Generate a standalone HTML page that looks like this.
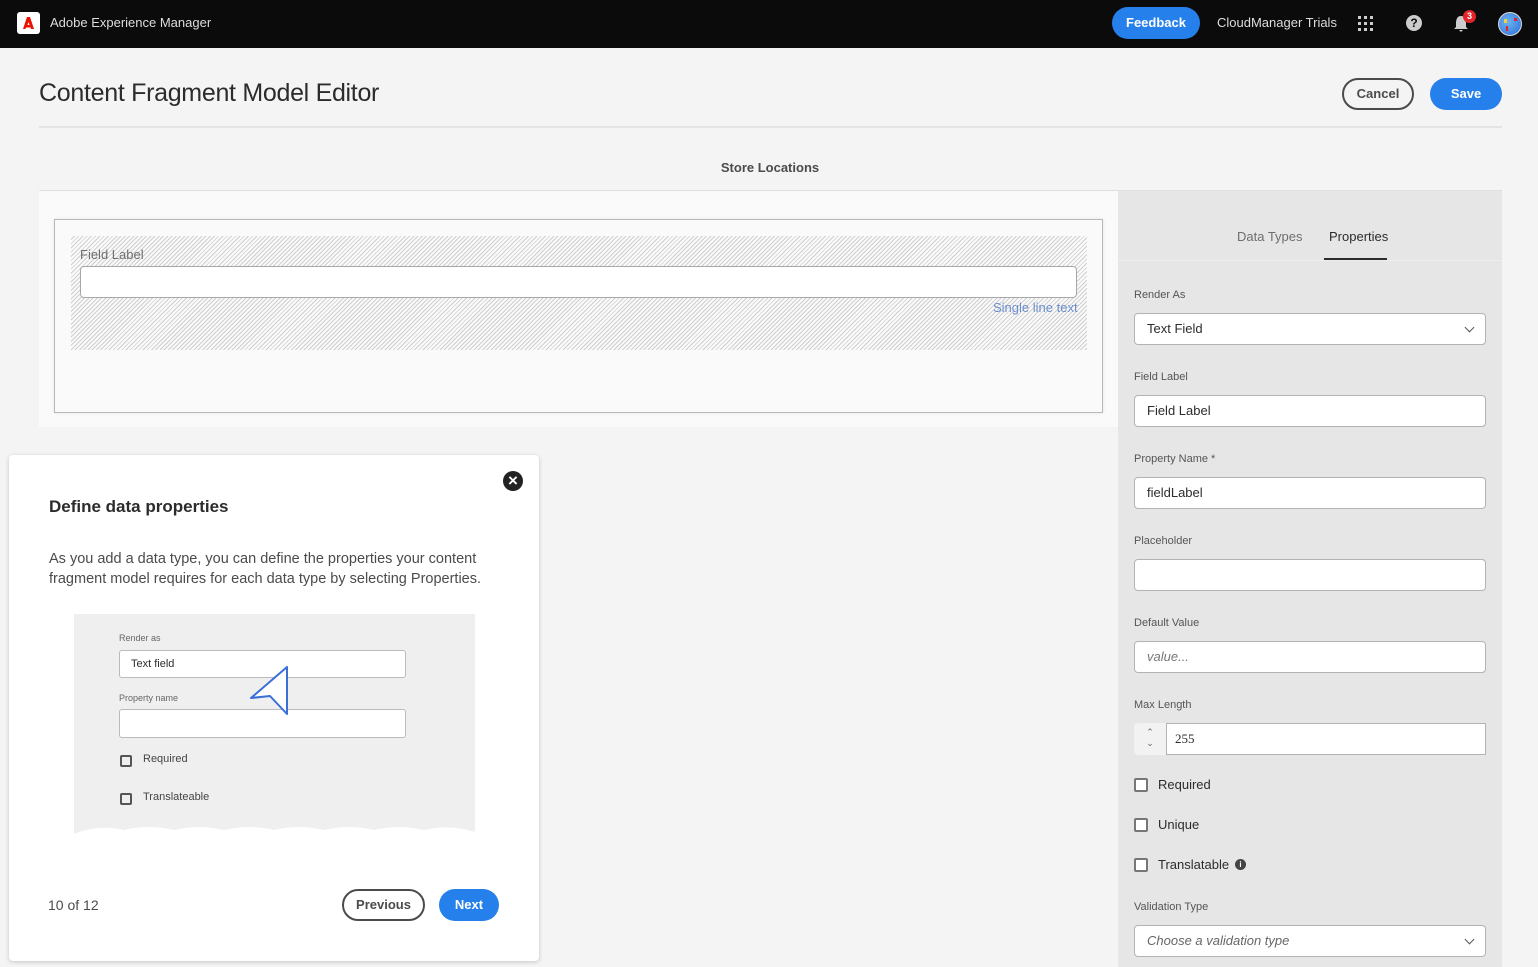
<!DOCTYPE html>
<html><head><meta charset="utf-8"><style>
*{box-sizing:border-box;margin:0;padding:0}
body{width:1538px;height:967px;overflow:hidden;background:#f4f4f4;font-family:"Liberation Sans",sans-serif;color:#2c2c2c;position:relative}
.a{position:absolute}
.top{left:0;top:0;width:1538px;height:48px;background:#0b0b0b}
.lbl{font-size:11px;color:#555}
.inp{background:#fff;border:1px solid #b3b3b3;border-radius:4px;height:32px;font-size:13px;padding:0 12px;line-height:30px;color:#2c2c2c}
.cb{width:14px;height:14px;border:2px solid #777;border-radius:2px;background:#fff}
.chev{position:absolute;right:12px;top:10px;width:7px;height:7px;border-right:1.5px solid #555;border-bottom:1.5px solid #555;transform:rotate(45deg)}
</style></head><body>
<div class="a top">
 <div class="a" style="left:17px;top:12px;width:23px;height:22px;background:#fff;border-radius:3px"><svg width="23" height="22" viewBox="0 0 23 22"><path d="M6 17 L10 5 L13 5 L17 17 L14 17 L11.5 10 L10.5 13 L12.5 13 L13.3 15.5 L9 15.5 L8.5 17Z" fill="#eb1000"/></svg></div>
 <div class="a" style="left:50px;top:15px;font-size:13px;color:#ddd">Adobe Experience Manager</div>
 <div class="a" style="left:1112px;top:7px;width:88px;height:32px;border-radius:16px;background:#2680eb;color:#fff;font-size:13px;font-weight:bold;text-align:center;line-height:32px">Feedback</div>
 <div class="a" style="left:1217px;top:15px;font-size:13px;color:#ddd">CloudManager Trials</div>
 <svg class="a" style="left:1357px;top:15px" width="17" height="17"><g fill="#ccc"><rect x="1" y="1" width="3" height="3"/><rect x="7" y="1" width="3" height="3"/><rect x="13" y="1" width="3" height="3"/><rect x="1" y="7" width="3" height="3"/><rect x="7" y="7" width="3" height="3"/><rect x="13" y="7" width="3" height="3"/><rect x="1" y="13" width="3" height="3"/><rect x="7" y="13" width="3" height="3"/><rect x="13" y="13" width="3" height="3"/></g></svg>
 <div class="a" style="left:1406px;top:15px;width:16px;height:16px;border-radius:8px;background:#ccc;color:#0b0b0b;font-size:12px;font-weight:bold;text-align:center;line-height:16px">?</div>
 <svg class="a" style="left:1452px;top:14px" width="18" height="20"><path d="M9 2 C5 2 4 6 4 9 L4 13 L2 15 L16 15 L14 13 L14 9 C14 6 13 2 9 2Z M7 16 L11 16 L9 18Z" fill="#ccc"/></svg>
 <div class="a" style="left:1463px;top:10px;width:13px;height:13px;border-radius:7px;background:#e3242b;color:#fff;font-size:9px;text-align:center;line-height:13px;font-weight:bold">3</div>
 <div class="a" style="left:1498px;top:12px;width:24px;height:24px;border-radius:12px;background:radial-gradient(circle at 40% 40%,#6fb3f0,#2a6ed8);border:1px solid #ddd"><div class="a" style="left:5px;top:6px;width:3px;height:4px;background:#f3d13a"></div><div class="a" style="left:15px;top:5px;width:3px;height:3px;background:#e3242b"></div><div class="a" style="left:7px;top:13px;width:2px;height:5px;background:#e3242b"></div></div>
</div>
<div class="a" style="left:39px;top:79px;font-size:25px;color:#2c2c2c;letter-spacing:-0.3px">Content Fragment Model Editor</div>
<div class="a" style="left:1342px;top:78px;width:72px;height:32px;border:2px solid #4b4b4b;border-radius:16px;font-size:13px;font-weight:bold;text-align:center;line-height:28px;color:#4b4b4b">Cancel</div>
<div class="a" style="left:1430px;top:78px;width:72px;height:32px;border-radius:16px;background:#2680eb;color:#fff;font-size:13px;font-weight:bold;text-align:center;line-height:32px">Save</div>
<div class="a" style="left:39px;top:126px;width:1463px;height:2px;background:#e4e4e4"></div>
<div class="a" style="left:0;top:160px;width:1540px;text-align:center;font-size:13px;font-weight:bold;color:#4b4b4b">Store Locations</div>
<div class="a" style="left:39px;top:190px;width:1463px;height:1px;background:#e0e0e0"></div>
<div class="a" style="left:39px;top:191px;width:1079px;height:236px;background:#fafafa"></div>
<div class="a" style="left:54px;top:219px;width:1049px;height:194px;border:1px solid #b8b8b8;background:#fafafa;box-shadow:0 0 4px rgba(0,0,0,.08)"></div>
<div class="a" style="left:71px;top:236px;width:1016px;height:114px;background:repeating-linear-gradient(135deg,#fafafa 0 2px,#cfcfcf 2px 3px)"></div>
<div class="a" style="left:80px;top:247px;font-size:13px;color:#6e6e6e">Field Label</div>
<div class="a" style="left:80px;top:266px;width:997px;height:32px;background:#fff;border:1px solid #a8a8a8;border-radius:4px"></div>
<div class="a" style="left:993px;top:300px;font-size:13px;color:#6b8fd0">Single line text</div>
<div class="a" style="left:1118px;top:191px;width:384px;height:776px;background:#e6e6e6"></div>
<div class="a" style="left:1118px;top:260px;width:384px;height:1px;background:#ededed"></div>
<div class="a" style="left:1237px;top:229px;font-size:13px;color:#6e6e6e">Data Types</div>
<div class="a" style="left:1329px;top:229px;font-size:13px;color:#2c2c2c">Properties</div>
<div class="a" style="left:1324px;top:258px;width:63px;height:2px;background:#2c2c2c"></div>
<div class="a lbl" style="left:1134px;top:289px">Render As</div>
<div class="a inp" style="left:1134px;top:313px;width:352px">Text Field<span class="chev"></span></div>
<div class="a lbl" style="left:1134px;top:371px">Field Label</div>
<div class="a inp" style="left:1134px;top:395px;width:352px">Field Label</div>
<div class="a lbl" style="left:1134px;top:453px">Property Name *</div>
<div class="a inp" style="left:1134px;top:477px;width:352px">fieldLabel</div>
<div class="a lbl" style="left:1134px;top:535px">Placeholder</div>
<div class="a inp" style="left:1134px;top:559px;width:352px"></div>
<div class="a lbl" style="left:1134px;top:617px">Default Value</div>
<div class="a inp" style="left:1134px;top:641px;width:352px;font-style:italic;color:#777">value...</div>
<div class="a lbl" style="left:1134px;top:699px">Max Length</div>
<div class="a" style="left:1134px;top:723px;width:32px;height:32px;background:#f2f2f2;border-radius:4px 0 0 4px;font-size:9px;color:#666;text-align:center;line-height:11px;padding-top:4px">&#8963;<br>&#8964;</div>
<div class="a inp" style="left:1166px;top:723px;width:320px;border-radius:0;padding-left:8px;font-family:'Liberation Serif',serif">255</div>
<div class="a cb" style="left:1134px;top:778px"></div><div class="a" style="left:1158px;top:777px;font-size:13px">Required</div>
<div class="a cb" style="left:1134px;top:818px"></div><div class="a" style="left:1158px;top:817px;font-size:13px">Unique</div>
<div class="a cb" style="left:1134px;top:858px"></div><div class="a" style="left:1158px;top:857px;font-size:13px">Translatable</div>
<div class="a" style="left:1235px;top:859px;width:11px;height:11px;border-radius:6px;background:#444;color:#fff;font-size:8px;text-align:center;line-height:11px;font-weight:bold">i</div>
<div class="a lbl" style="left:1134px;top:901px">Validation Type</div>
<div class="a inp" style="left:1134px;top:925px;width:352px;font-style:italic;color:#666">Choose a validation type<span class="chev"></span></div>
<div class="a" style="left:9px;top:455px;width:530px;height:506px;background:#fff;border-radius:4px;box-shadow:0 1px 4px rgba(0,0,0,.2)"></div>
<div class="a" style="left:503px;top:471px;width:20px;height:20px;border-radius:10px;background:#222;color:#fff;text-align:center;line-height:20px;font-size:17px;font-weight:bold">&#215;</div>
<div class="a" style="left:49px;top:497px;font-size:17px;font-weight:bold;color:#2c2c2c">Define data properties</div>
<div class="a" style="left:49px;top:549px;font-size:14.5px;line-height:20px;color:#4b4b4b;width:450px">As you add a data type, you can define the properties your content fragment model requires for each data type by selecting Properties.</div>
<div class="a" style="left:74px;top:614px;width:401px;height:222px;background:#efefef"></div>
<svg class="a" style="left:74px;top:824px" width="401" height="14"><path d="M0 14 L0 10 Q25 0 50 6 Q75 0 100 6 Q125 0 150 6 Q175 0 200 6 Q225 0 250 6 Q275 0 300 6 Q325 0 350 6 Q375 0 401 8 L401 14Z" fill="#fff"/></svg>
<div class="a" style="left:119px;top:633px;font-size:9px;color:#666">Render as</div>
<div class="a" style="left:119px;top:650px;width:287px;height:28px;background:#fff;border:1px solid #bbb;border-radius:3px;font-size:11px;line-height:26px;padding-left:11px">Text field</div>
<div class="a" style="left:119px;top:693px;font-size:9px;color:#666">Property name</div>
<div class="a" style="left:119px;top:709px;width:287px;height:29px;background:#fff;border:1px solid #bbb;border-radius:3px"></div>
<svg class="a" style="left:248px;top:664px" width="44" height="54"><path d="M39 3 L3 34 L22 32 L39 50Z" fill="#fff" stroke="#3a6fd8" stroke-width="2" stroke-linejoin="round"/></svg>
<div class="a" style="left:120px;top:755px;width:12px;height:12px;border:2px solid #555;border-radius:2px"></div>
<div class="a" style="left:143px;top:753px;font-size:11px;color:#444">Required</div>
<div class="a" style="left:120px;top:793px;width:12px;height:12px;border:2px solid #555;border-radius:2px"></div>
<div class="a" style="left:143px;top:791px;font-size:11px;color:#444">Translateable</div>
<div class="a" style="left:48px;top:897px;font-size:14px;color:#4b4b4b">10 of 12</div>
<div class="a" style="left:342px;top:889px;width:83px;height:32px;border:2px solid #4b4b4b;border-radius:16px;font-size:13px;font-weight:bold;text-align:center;line-height:28px;color:#4b4b4b">Previous</div>
<div class="a" style="left:439px;top:889px;width:60px;height:32px;border-radius:16px;background:#2680eb;color:#fff;font-size:13px;font-weight:bold;text-align:center;line-height:32px">Next</div>
</body></html>
